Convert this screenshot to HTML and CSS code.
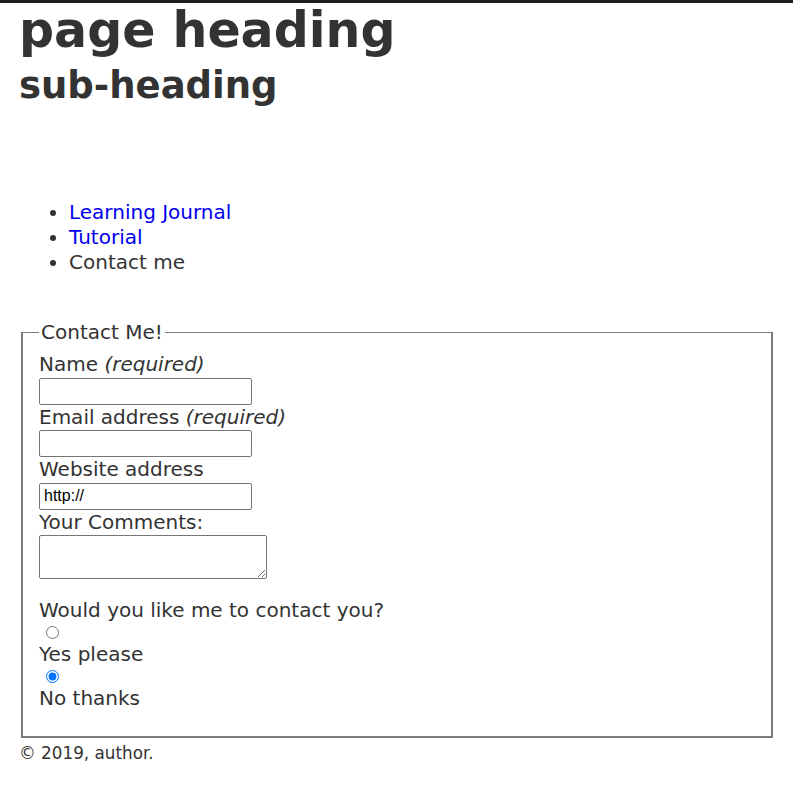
FILE: index.html
```html
<!DOCTYPE html>
<html lang="en">
<head>
<meta charset="utf-8">
<title>Contact me</title>
<link rel="stylesheet" href="styles.css">
</head>
<body>
<header class="site-header">
  <h1 class="page-title">page heading</h1>
  <h2 class="page-subtitle">sub-heading</h2>
</header>
<nav class="site-nav">
  <ul class="nav-list">
    <li><a href="#" class="nav-link">Learning Journal</a></li>
    <li><a href="#" class="nav-link">Tutorial</a></li>
    <li>Contact me</li>
  </ul>
</nav>
<main class="content">
  <form class="contact-form">
    <fieldset class="contact-fieldset">
      <legend class="contact-legend">Contact Me!</legend>
      <label class="field-label" for="name">Name <em>(required)</em></label>
      <input class="text-input" type="text" id="name">
      <label class="field-label" for="email">Email address <em>(required)</em></label>
      <input class="text-input" type="email" id="email">
      <label class="field-label" for="site">Website address</label>
      <input class="text-input" type="url" id="site" value="http://">
      <label class="field-label" for="comments">Your Comments:</label>
      <textarea class="comments" id="comments"></textarea>
      <p class="question">Would you like me to contact you?</p>
      <div class="radio-row"><input class="radio" type="radio" name="contact" id="yes"></div>
      <label class="field-label" for="yes">Yes please</label>
      <div class="radio-row"><input class="radio" type="radio" name="contact" id="no" checked></div>
      <label class="field-label" for="no">No thanks</label>
    </fieldset>
  </form>
</main>
<footer class="site-footer">&copy; 2019, author.</footer>
</body>
</html>
```

FILE: styles.css
```css
html, body {
  margin: 0;
  padding: 0;
  background: #fff;
}
body {
  border-top: 3px solid #1e1e1e;
  padding: 0 18px 0 19px;
  font-family: "DejaVu Sans", Verdana, sans-serif;
  color: #333;
  font-size: 20px;
}
.site-header {
  padding: 0;
}
.page-title {
  margin: 0;
  font-size: 49px;
  line-height: 56px;
  font-weight: bold;
}
.page-subtitle {
  margin: 3px 0 0 0;
  font-size: 37px;
  line-height: 48px;
  font-weight: bold;
}
.site-nav {
  margin-top: 90px;
}
.nav-list {
  margin: 0;
  padding-left: 50px;
  line-height: 25px;
}
.nav-link {
  color: #0000ee;
  text-decoration: none;
}
.content {
  margin-top: 45px;
}
.contact-form {
  margin: 0;
}
.contact-fieldset {
  margin: 0 2px;
  padding: 7px 16px 24px 16px;
  border: 2px solid #7a7a7a;
  border-width: 1px 2px 2px 2px;
}
.contact-legend {
  padding: 0 2px;
  line-height: 25px;
}
.field-label {
  display: block;
  line-height: 25.5px;
}
.text-input {
  display: block;
  box-sizing: border-box;
  width: 213px;
  height: 27px;
  margin: 0;
  font-family: "Liberation Sans", Arial, sans-serif;
  font-size: 16px;
  color: #000;
  border: 1px solid #767676;
  border-radius: 2px;
  padding: 1px 4px;
}
.comments {
  display: block;
  box-sizing: border-box;
  width: 228px;
  height: 44px;
  margin: 0;
  border: 1px solid #767676;
  border-radius: 2px;
}
.question {
  margin: 19px 0 0 0;
  line-height: 25.5px;
}
.radio-row {
  height: 16.5px;
}
.radio {
  display: block;
  margin: 2px 0 0 7px;
  width: 13px;
  height: 13px;
}
.site-footer {
  font-size: 16.8px;
  line-height: 30px;
}
```
